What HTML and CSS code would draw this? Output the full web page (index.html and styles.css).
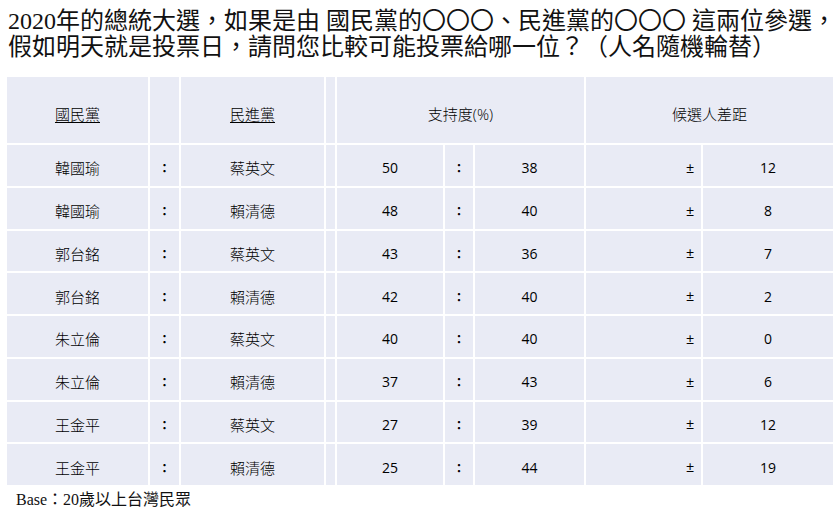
FILE: index.html
```html
<!DOCTYPE html>
<html lang="zh-Hant">
<head>
<meta charset="utf-8">
<title>2020年總統大選民調</title>
<link rel="stylesheet" href="styles.css">
</head>
<body>
<h1 class="title">2020年的總統大選，如果是由 國民黨的〇〇〇、民進黨的〇〇〇 這兩位參選，<br>假如明天就是投票日，請問您比較可能投票給哪一位？（人名隨機輪替）</h1>
<div class="table">
  <div class="cell head"><u>國民黨</u></div>
  <div class="cell head"></div>
  <div class="cell head"><u>民進黨</u></div>
  <div class="cell head"></div>
  <div class="cell head span3">支持度(%)</div>
  <div class="cell head span2">候選人差距</div>

  <div class="cell">韓國瑜</div><div class="cell colon">：</div><div class="cell">蔡英文</div><div class="cell"></div><div class="cell num">50</div><div class="cell colon">：</div><div class="cell num">38</div><div class="cell pm">±</div><div class="cell num">12</div>
  <div class="cell">韓國瑜</div><div class="cell colon">：</div><div class="cell">賴清德</div><div class="cell"></div><div class="cell num">48</div><div class="cell colon">：</div><div class="cell num">40</div><div class="cell pm">±</div><div class="cell num">8</div>
  <div class="cell">郭台銘</div><div class="cell colon">：</div><div class="cell">蔡英文</div><div class="cell"></div><div class="cell num">43</div><div class="cell colon">：</div><div class="cell num">36</div><div class="cell pm">±</div><div class="cell num">7</div>
  <div class="cell">郭台銘</div><div class="cell colon">：</div><div class="cell">賴清德</div><div class="cell"></div><div class="cell num">42</div><div class="cell colon">：</div><div class="cell num">40</div><div class="cell pm">±</div><div class="cell num">2</div>
  <div class="cell">朱立倫</div><div class="cell colon">：</div><div class="cell">蔡英文</div><div class="cell"></div><div class="cell num">40</div><div class="cell colon">：</div><div class="cell num">40</div><div class="cell pm">±</div><div class="cell num">0</div>
  <div class="cell">朱立倫</div><div class="cell colon">：</div><div class="cell">賴清德</div><div class="cell"></div><div class="cell num">37</div><div class="cell colon">：</div><div class="cell num">43</div><div class="cell pm">±</div><div class="cell num">6</div>
  <div class="cell">王金平</div><div class="cell colon">：</div><div class="cell">蔡英文</div><div class="cell"></div><div class="cell num">27</div><div class="cell colon">：</div><div class="cell num">39</div><div class="cell pm">±</div><div class="cell num">12</div>
  <div class="cell">王金平</div><div class="cell colon">：</div><div class="cell">賴清德</div><div class="cell"></div><div class="cell num">25</div><div class="cell colon">：</div><div class="cell num">44</div><div class="cell pm">±</div><div class="cell num">19</div>
</div>
<p class="base">Base：20歲以上台灣民眾</p>
</body>
</html>
```

FILE: styles.css
```css
html, body {
  margin: 0;
  padding: 0;
  background: #ffffff;
}
body {
  padding: 8px 7px 0 8px;
  color: #000;
}
.title {
  margin: 0;
  font-family: "Liberation Serif", "Noto Sans CJK TC", serif;
  font-weight: normal;
  font-size: 24px;
  line-height: 26px;
  color: #111;
  white-space: nowrap;
}
.table {
  margin: 17px 0 0 -1px;
  width: 826px;
  display: grid;
  grid-template-columns: 141px 29px 143px 9px 106px 28px 109px 115px 130px;
  grid-template-rows: 66px repeat(8, 40.75px);
  gap: 2px;
  background: #ffffff;
  font-family: "Open Sans", "Noto Sans CJK TC", sans-serif;
  font-size: 15px;
  font-weight: 300;
}
.cell {
  background: #e9ebf5;
  display: flex;
  align-items: center;
  justify-content: center;
  padding-top: 5px;
  box-sizing: border-box;
  color: #000;
}
.head {
  padding-top: 6px;
}
.head u {
  text-underline-offset: 2px;
}
.span3 { grid-column: span 3; }
.span2 { grid-column: span 2; }
.colon {
  font-family: "Noto Sans CJK TC", sans-serif;
  font-weight: 700;
  font-size: 12px;
}
.pm {
  justify-content: flex-end;
  padding-right: 7px;
  font-family: "Liberation Sans", sans-serif;
  font-weight: normal;
  font-size: 14px;
}
.num {
  font-size: 14px;
  font-weight: normal;
}
.base {
  margin: 5px 0 0 8px;
  font-family: "Liberation Serif", "Noto Sans CJK TC", serif;
  font-size: 16px;
  line-height: 20px;
  color: #111;
}
```
